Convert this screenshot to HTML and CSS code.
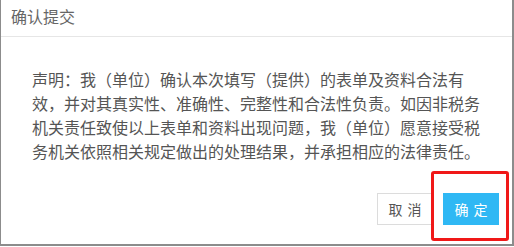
FILE: index.html
```html
<!DOCTYPE html>
<html lang="zh-CN">
<head>
<meta charset="utf-8">
<title>确认提交</title>
<link rel="stylesheet" href="styles.css">
</head>
<body>
<div class="dialog">
  <div class="dialog-header">确认提交</div>
  <div class="dialog-body">声明：我（单位）确认本次填写（提供）的表单及资料合法有效，并对其真实性、准确性、完整性和合法性负责。如因非税务机关责任致使以上表单和资料出现问题，我（单位）愿意接受税务机关依照相关规定做出的处理结果，并承担相应的法律责任。</div>
  <div class="dialog-footer">
    <button class="btn btn-cancel">取消</button>
    <button class="btn btn-ok">确定</button>
  </div>
  <div class="highlight"></div>
</div>
</body>
</html>
```

FILE: styles.css
```css
html, body {
  margin: 0;
  padding: 0;
  background: #fff;
}
body {
  font-family: "Noto Sans CJK SC", "Noto Sans", sans-serif;
}
.dialog {
  position: relative;
  width: 514px;
  height: 246px;
  box-sizing: border-box;
  border-left: 1px solid #8c8c8c;
  border-right: 2px solid #8c8c8c;
  border-bottom: 2px solid #8c8c8c;
  background: #fff;
}
.dialog-header {
  height: 36px;
  line-height: 32px;
  padding-left: 10px;
  font-size: 16px;
  color: #666;
  border-bottom: 1px solid #e6e6e6;
}
.dialog-body {
  padding: 30px 31px 0 31px;
  font-size: 16px;
  line-height: 24px;
  color: #555;
}
.dialog-footer {
  display: flex;
  justify-content: flex-end;
  gap: 10px;
  margin-top: 30px;
  padding-right: 13px;
}
.btn {
  width: 56px;
  height: 32px;
  box-sizing: border-box;
  padding: 0 0 0 5px;
  font-family: "Noto Sans CJK SC", "Noto Sans", sans-serif;
  font-size: 14px;
  letter-spacing: 5px;
  line-height: 30px;
  border-radius: 0;
  cursor: pointer;
}
.btn-cancel {
  background: #fff;
  border: 1px solid #dcdcdc;
  color: #555;
}
.btn-ok {
  background: #2fb8f4;
  border: 1px solid #2fb8f4;
  color: #fff;
}
.highlight {
  position: absolute;
  left: 430px;
  top: 171px;
  width: 78px;
  height: 70px;
  box-sizing: border-box;
  border: 3px solid #f01818;
  border-radius: 3px;
}
```
